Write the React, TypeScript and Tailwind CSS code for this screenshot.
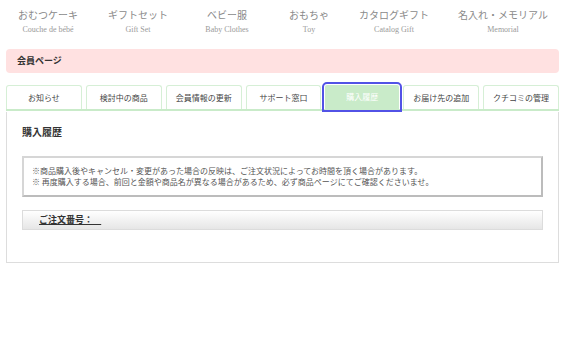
const navItems = [
  { jp: "おむつケーキ", en: "Couche de bébé", w: "w-[90px]" },
  { jp: "ギフトセット", en: "Gift Set", w: "w-[90px]" },
  { jp: "ベビー服", en: "Baby Clothes", w: "w-[88px]" },
  { jp: "おもちゃ", en: "Toy", w: "w-[76px]" },
  { jp: "カタログギフト", en: "Catalog Gift", w: "w-[94px]" },
  { jp: "名入れ・メモリアル", en: "Memorial", w: "w-[124px]" },
];

const tabs = [
  "お知らせ",
  "検討中の商品",
  "会員情報の更新",
  "サポート窓口",
  "購入履歴",
  "お届け先の追加",
  "クチコミの管理",
];

const activeTab = "購入履歴";

export default function App() {
  return (
    <div className="min-h-[359px] w-[570px] bg-white font-['Noto_Sans_CJK_JP',sans-serif] text-[#333]">
      <nav className="flex pl-[3px] pt-[7px]">
        {navItems.map((item) => (
          <div key={item.jp} className={`${item.w} flex flex-col items-center`}>
            <span className="text-[10px] leading-[16px] text-[#8a8a8a]">{item.jp}</span>
            <span className="mt-[2px] font-['Liberation_Serif',serif] text-[8px] leading-[10px] text-[#9a9a9a]">
              {item.en}
            </span>
          </div>
        ))}
      </nav>

      <div className="ml-[6px] mr-[11px] mt-[14px] flex h-[24px] items-center rounded-[4px] bg-[#ffe1e1] px-[11px]">
        <span className="text-[9px] font-bold">会員ページ</span>
      </div>

      <div className="ml-[6px] mr-[11px] mt-[12px]">
        <div className="flex gap-[4px] border-b-2 border-[#c9ebc9]">
          {tabs.map((t) =>
            t === activeTab ? (
              <div
                key={t}
                className="flex h-[24px] flex-1 items-center justify-center rounded-t-[2px] bg-[#c9ebc9] text-[8px] text-white outline-2 outline-offset-[1px] outline-[#5252e6]"
              >
                {t}
              </div>
            ) : (
              <div
                key={t}
                className="flex h-[24px] flex-1 items-center justify-center rounded-t-[3px] border border-b-0 border-[#d6efd6] bg-white text-[8px] text-[#444]"
              >
                {t}
              </div>
            ),
          )}
        </div>

        <div className="mt-[1px] border border-t-0 border-[#dddddd] px-[15px] pb-[32px]">
          <h2 className="pt-[13px] text-[10px] font-bold leading-[14px]">購入履歴</h2>

          <div className="mt-[17px] border-2 border-[#d6d6d6] border-r-[#bcbcbc] border-b-[#bcbcbc] px-[8px] pb-[8px] pt-[7px] text-[8px] leading-[11px] text-[#555]">
            <p>※商品購入後やキャンセル・変更があった場合の反映は、ご注文状況によってお時間を頂く場合があります。</p>
            <p>※ 再度購入する場合、前回と金額や商品名が異なる場合があるため、必ず商品ページにてご確認くださいませ。</p>
          </div>

          <div className="mt-[13px] flex h-[20px] items-center border border-[#dcdcdc] bg-gradient-to-b from-white to-[#e6e6e6] px-[16px]">
            <span className="text-[9px] font-bold underline">ご注文番号：&nbsp;&nbsp;&nbsp;&nbsp;</span>
          </div>
        </div>
      </div>
    </div>
  );
}
